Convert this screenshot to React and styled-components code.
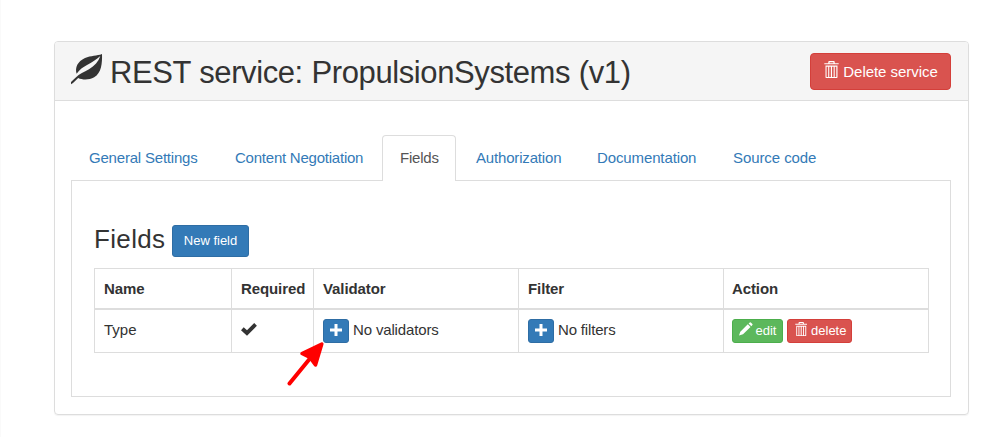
import React from 'react';
import styled, { createGlobalStyle } from 'styled-components';

const GlobalStyle = createGlobalStyle`
  * { box-sizing: border-box; }
  body {
    margin: 0;
    background: #fff;
    color: #333;
    font: 15px/21px "Liberation Sans", Arial, sans-serif;
  }
`;

const Page = styled.main`
  height: 437px;
  padding: 41px 28px 0 53px;
  border-left: 1px solid #fafafa;
`;

const Panel = styled.section`
  height: 374px;
  border: 1px solid #ddd;
  border-radius: 4px;
  box-shadow: 0 1px 1px rgba(0, 0, 0, 0.05);
`;

const PanelHeader = styled.header`
  display: flex;
  justify-content: space-between;
  align-items: flex-start;
  height: 59px;
  padding: 11px 17px 0 16px;
  background: #f5f5f5;
  border-bottom: 1px solid #ddd;
  border-radius: 3px 3px 0 0;
`;

const Title = styled.h1`
  display: flex;
  margin: 0;
  font-size: 31px;
  font-weight: 400;
  line-height: 39px;
  letter-spacing: -0.4px;
  word-spacing: 0.5px;
  white-space: nowrap;

  svg { margin: 1px 7px 0 0; }
`;

const tones = {
  primary: ['#337ab7', '#2e6da4'],
  success: ['#5cb85c', '#4cae4c'],
  danger: ['#d9534f', '#d43f3a'],
};

const sizes = {
  medium: 'height: 37px; font-size: 15px; letter-spacing: -0.05px; border-radius: 4px;',
  small: 'height: 32px; font-size: 13px; border-radius: 3px;',
  tiny: 'height: 24px; font-size: 13px; border-radius: 3px;',
};

const Button = styled.button`
  display: inline-flex;
  flex: none;
  align-items: center;
  justify-content: center;
  gap: ${(p) => p.$gap || 4}px;
  width: ${(p) => p.$width}px;
  padding: 0 0 0 ${(p) => p.$inset || 0}px;
  color: #fff;
  font-family: inherit;
  line-height: 20px;
  white-space: nowrap;
  background: ${(p) => tones[p.$tone][0]};
  border: 1px solid ${(p) => tones[p.$tone][1]};
  ${(p) => sizes[p.$size]}
`;

const PanelBody = styled.div`
  padding: 34px 17px 0 16px;
`;

const Tabs = styled.nav`
  display: flex;
  height: 46px;
  margin-bottom: -1px;
  position: relative;
`;

const Tab = styled.a`
  flex: none;
  width: ${(p) => p.$width}px;
  margin-right: 2px;
  padding: 11px 0 0 17px;
  color: ${(p) => (p.$active ? '#555' : '#337ab7')};
  background: ${(p) => (p.$active ? '#fff' : 'transparent')};
  border: 1px solid ${(p) => (p.$active ? '#ddd' : 'transparent')};
  border-bottom: 0;
  border-radius: 4px 4px 0 0;
  letter-spacing: ${(p) => p.$tracking}px;
  white-space: nowrap;
`;

const TabContent = styled.div`
  height: 217px;
  padding: 44px 21px 0 22px;
  border: 1px solid #ddd;
`;

const SectionHeader = styled.div`
  display: flex;
  gap: 7px;
  height: 43px;
`;

const SectionTitle = styled.h2`
  width: 71px;
  margin: 0;
  font-size: 26px;
  font-weight: 400;
  line-height: 28px;
  letter-spacing: 0.35px;
`;

const Table = styled.table`
  width: 835px;
  table-layout: fixed;
  border-collapse: separate;
  border-spacing: 0;
  border-top: 1px solid #ddd;
  border-left: 1px solid #ddd;

  th, td {
    padding: 0 0 0 9px;
    text-align: left;
    white-space: nowrap;
    border-right: 1px solid #ddd;
  }

  th:last-child, td:last-child { padding-left: 8px; }
`;

const HeadCell = styled.th`
  height: 41px;
  border-bottom: 2px solid #ddd;
  letter-spacing: -0.1px;
`;

const Cell = styled.td`
  height: 43px;
  border-bottom: 1px solid #ddd;
`;

const CellContent = styled.div`
  display: flex;
  align-items: center;
  gap: 4px;
  height: 24px;
`;

const CellText = styled.span`
  margin-top: -3px;
  letter-spacing: ${(p) => p.$tracking || 0}px;
`;

const Glyph = styled.svg`
  display: block;
  flex: none;
  fill: currentColor;
  margin-top: ${(p) => p.$lift || 0}px;
`;

const Pointer = styled.svg`
  position: absolute;
  left: 285px;
  top: 340px;
  pointer-events: none;
`;

const Leaf = () => (
  <Glyph width="32" height="32" viewBox="0 0 32 32">
    <path d="M31 0C26 2 20 1.5 14 4C6.5 7.5 3.8 13.5 5.6 19.8C8.5 15.5 12 13.2 16 11C21 8.3 25.5 5.5 29.3 2C27.5 7.5 23.5 12 18 15.3C13 18.3 8.5 19.8 4.5 23.7L0 28V30.2L2 29L7.2 24C11.5 26 18 26.2 23.2 23.3C30.5 19 31.3 9 31 0Z" />
  </Glyph>
);

const Trash = ({ size = 15 }) => (
  <Glyph width={size} height={size * 16 / 14} viewBox="0 0 14 16" $lift={-4}>
    <path fillRule="evenodd" d="M4 2V0.8Q4 0 5 0H9Q10 0 10 .8V2H13.7V3.1H.3V2ZM5.2 1.1V2H8.8V1.1ZM1.4 4.3H12.6V15Q12.6 16 11.6 16H2.4Q1.4 16 1.4 15ZM2.4 5.4V14.9H3.9V5.4ZM4.9 5.4V14.9H6.4V5.4ZM7.5 5.4V14.9H9V5.4ZM10 5.4V14.9H11.5V5.4Z" />
  </Glyph>
);

const Plus = () => (
  <Glyph width="12" height="12" viewBox="0 0 12 12" $lift={-2}>
    <path d="M4.5 0H7.5V4.5H12V7.5H7.5V12H4.5V7.5H0V4.5H4.5Z" />
  </Glyph>
);

const Pencil = () => (
  <Glyph width="14" height="14" viewBox="0 0 14 14" $lift={-4}>
    <path d="M0 13.5L1.3 9.7L8.8 2.3L11.5 5L4 12.3ZM9.6 1.5L10.8.4Q11.3 0 11.8.4L13.4 2Q13.8 2.5 13.4 3L12.3 4.2Z" />
  </Glyph>
);

const Check = () => (
  <Glyph width="16" height="13" viewBox="0 0 16 13" $lift={-3}>
    <path d="M0 7.3L2.7 4.3L6 7.2L13.2 0L15.9 2.8L6 12.8Z" />
  </Glyph>
);

const tabs = [
  ['General Settings', 144, -0.2],
  ['Content Negotiation', 163, -0.23],
  ['Fields', 74, -0.2],
  ['Authorization', 119, -0.17],
  ['Documentation', 134, -0.12],
  ['Source code', 119, -0.08],
];

export default function App() {
  return (
    <>
      <GlobalStyle />
      <Page>
        <Panel>
          <PanelHeader>
            <Title><Leaf />REST service: PropulsionSystems (v1)</Title>
            <Button $tone="danger" $size="medium" $width={141} $inset={1}><Trash />Delete service</Button>
          </PanelHeader>
          <PanelBody>
            <Tabs>
              {tabs.map(([label, width, tracking]) => (
                <Tab key={label} $width={width} $tracking={tracking} $active={label === 'Fields'}>{label}</Tab>
              ))}
            </Tabs>
            <TabContent>
              <SectionHeader>
                <SectionTitle>Fields</SectionTitle>
                <Button $tone="primary" $size="small" $width={77}>New field</Button>
              </SectionHeader>
              <Table>
                <colgroup>
                  <col width="137" /><col width="82" /><col width="205" /><col width="205" /><col width="205" />
                </colgroup>
                <thead>
                  <tr>
                    {['Name', 'Required', 'Validator', 'Filter', 'Action'].map((name) => (
                      <HeadCell key={name}>{name}</HeadCell>
                    ))}
                  </tr>
                </thead>
                <tbody>
                  <tr>
                    <Cell><CellContent><CellText>Type</CellText></CellContent></Cell>
                    <Cell><CellContent><Check /></CellContent></Cell>
                    <Cell>
                      <CellContent>
                        <Button $tone="primary" $size="tiny" $width={26}><Plus /></Button>
                        <CellText $tracking={-0.15}>No validators</CellText>
                      </CellContent>
                    </Cell>
                    <Cell>
                      <CellContent>
                        <Button $tone="primary" $size="tiny" $width={26}><Plus /></Button>
                        <CellText $tracking={-0.17}>No filters</CellText>
                      </CellContent>
                    </Cell>
                    <Cell>
                      <CellContent>
                        <Button $tone="success" $size="tiny" $width={51} $gap={3}><Pencil />edit</Button>
                        <Button $tone="danger" $size="tiny" $width={65} $inset={2}><Trash size={12.5} />delete</Button>
                      </CellContent>
                    </Cell>
                  </tr>
                </tbody>
              </Table>
            </TabContent>
          </PanelBody>
        </Panel>
        <Pointer width="40" height="46" viewBox="285 340 40 46">
          <path d="M289.5 383.5L312 356" fill="none" stroke="#f00" strokeWidth="4" strokeLinecap="round" />
          <path d="M321.8 344L302 353.5L310 357.5L315.5 365Z" fill="#f00" stroke="#f00" strokeWidth="3.5" strokeLinejoin="round" />
        </Pointer>
      </Page>
    </>
  );
}
